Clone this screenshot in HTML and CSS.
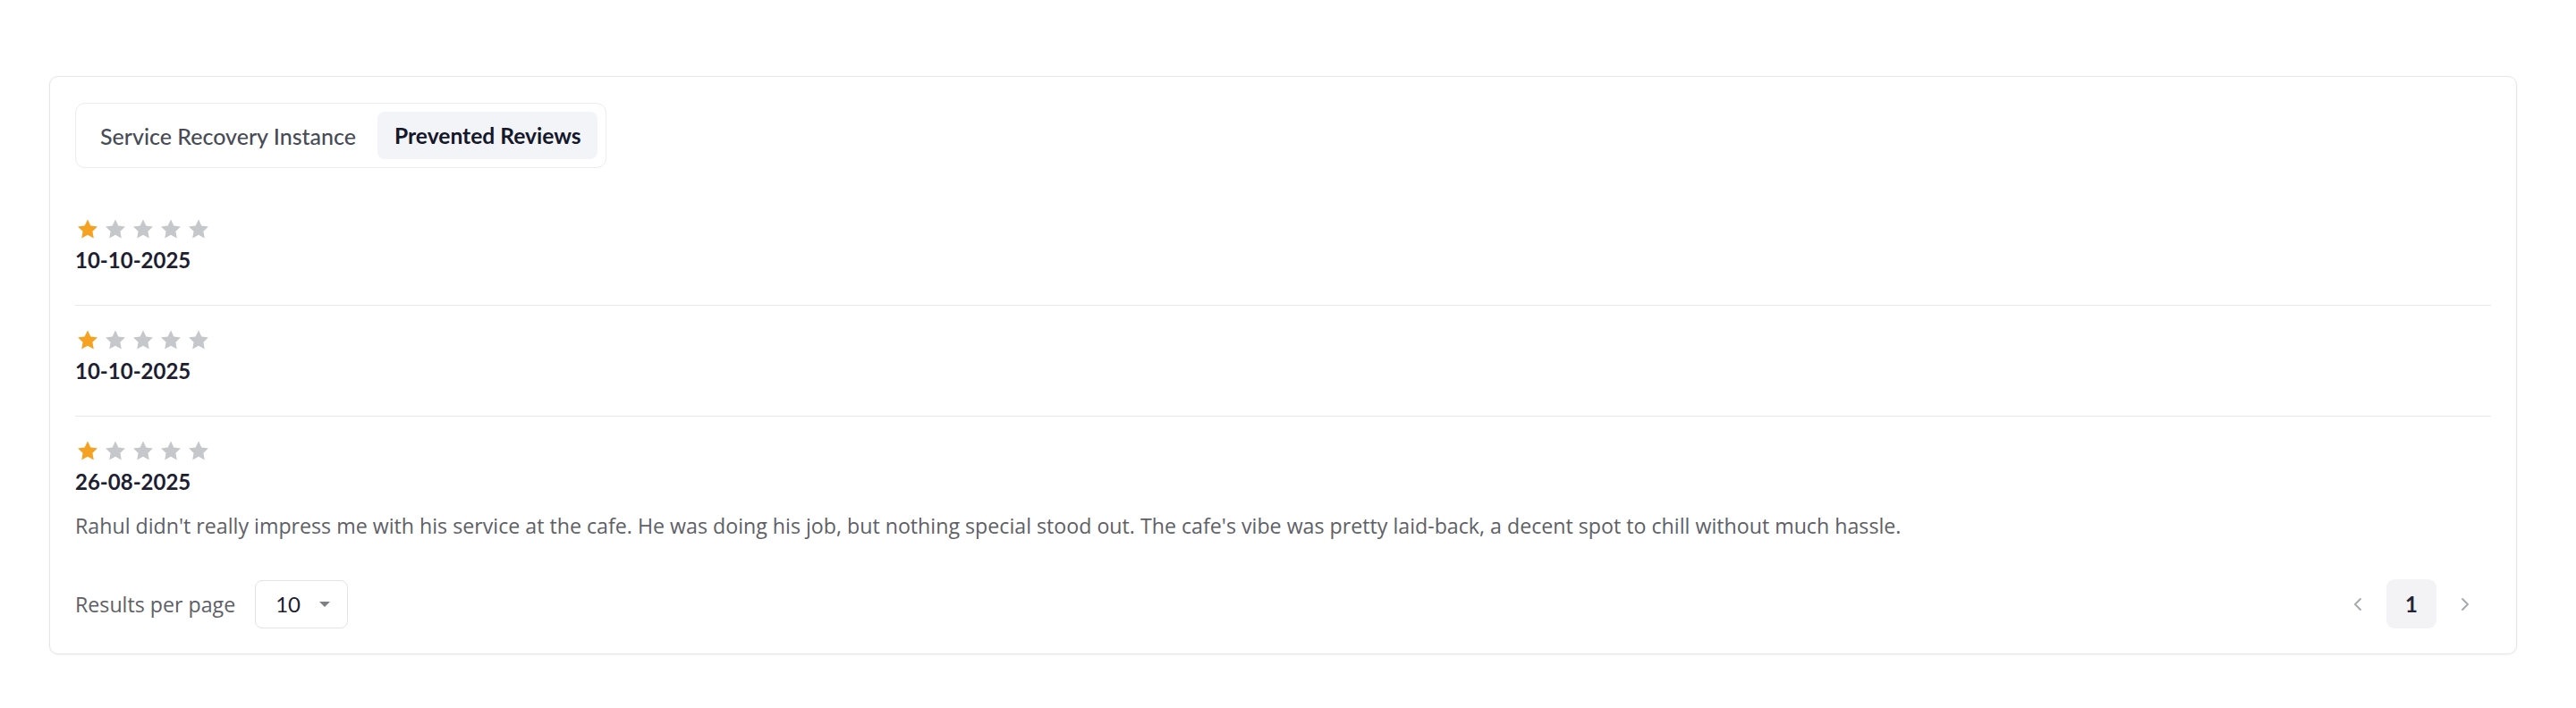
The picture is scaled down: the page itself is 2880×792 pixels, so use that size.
FILE: index.html
```html
<!DOCTYPE html>
<html lang="en">
<head>
<meta charset="utf-8">
<title>Prevented Reviews</title>
<link rel="stylesheet" href="styles.css">
</head>
<body>
<div class="page">
  <section class="card">
    <div class="tabs">
      <button class="tab">Service Recovery Instance</button>
      <button class="tab active">Prevented Reviews</button>
    </div>

    <ul class="reviews">
      <li class="review">
        <div class="stars">
          <svg class="star on" viewBox="0 0 24 24"><path d="M12 1.5l3.2 6.7 7.3 1-5.3 5 1.3 7.3L12 18l-6.5 3.5 1.3-7.3-5.3-5 7.3-1z"/></svg>
          <svg class="star" viewBox="0 0 24 24"><path d="M12 1.5l3.2 6.7 7.3 1-5.3 5 1.3 7.3L12 18l-6.5 3.5 1.3-7.3-5.3-5 7.3-1z"/></svg>
          <svg class="star" viewBox="0 0 24 24"><path d="M12 1.5l3.2 6.7 7.3 1-5.3 5 1.3 7.3L12 18l-6.5 3.5 1.3-7.3-5.3-5 7.3-1z"/></svg>
          <svg class="star" viewBox="0 0 24 24"><path d="M12 1.5l3.2 6.7 7.3 1-5.3 5 1.3 7.3L12 18l-6.5 3.5 1.3-7.3-5.3-5 7.3-1z"/></svg>
          <svg class="star" viewBox="0 0 24 24"><path d="M12 1.5l3.2 6.7 7.3 1-5.3 5 1.3 7.3L12 18l-6.5 3.5 1.3-7.3-5.3-5 7.3-1z"/></svg>
        </div>
        <div class="date">10-10-2025</div>
      </li>
      <li class="review">
        <div class="stars">
          <svg class="star on" viewBox="0 0 24 24"><path d="M12 1.5l3.2 6.7 7.3 1-5.3 5 1.3 7.3L12 18l-6.5 3.5 1.3-7.3-5.3-5 7.3-1z"/></svg>
          <svg class="star" viewBox="0 0 24 24"><path d="M12 1.5l3.2 6.7 7.3 1-5.3 5 1.3 7.3L12 18l-6.5 3.5 1.3-7.3-5.3-5 7.3-1z"/></svg>
          <svg class="star" viewBox="0 0 24 24"><path d="M12 1.5l3.2 6.7 7.3 1-5.3 5 1.3 7.3L12 18l-6.5 3.5 1.3-7.3-5.3-5 7.3-1z"/></svg>
          <svg class="star" viewBox="0 0 24 24"><path d="M12 1.5l3.2 6.7 7.3 1-5.3 5 1.3 7.3L12 18l-6.5 3.5 1.3-7.3-5.3-5 7.3-1z"/></svg>
          <svg class="star" viewBox="0 0 24 24"><path d="M12 1.5l3.2 6.7 7.3 1-5.3 5 1.3 7.3L12 18l-6.5 3.5 1.3-7.3-5.3-5 7.3-1z"/></svg>
        </div>
        <div class="date">10-10-2025</div>
      </li>
      <li class="review">
        <div class="stars">
          <svg class="star on" viewBox="0 0 24 24"><path d="M12 1.5l3.2 6.7 7.3 1-5.3 5 1.3 7.3L12 18l-6.5 3.5 1.3-7.3-5.3-5 7.3-1z"/></svg>
          <svg class="star" viewBox="0 0 24 24"><path d="M12 1.5l3.2 6.7 7.3 1-5.3 5 1.3 7.3L12 18l-6.5 3.5 1.3-7.3-5.3-5 7.3-1z"/></svg>
          <svg class="star" viewBox="0 0 24 24"><path d="M12 1.5l3.2 6.7 7.3 1-5.3 5 1.3 7.3L12 18l-6.5 3.5 1.3-7.3-5.3-5 7.3-1z"/></svg>
          <svg class="star" viewBox="0 0 24 24"><path d="M12 1.5l3.2 6.7 7.3 1-5.3 5 1.3 7.3L12 18l-6.5 3.5 1.3-7.3-5.3-5 7.3-1z"/></svg>
          <svg class="star" viewBox="0 0 24 24"><path d="M12 1.5l3.2 6.7 7.3 1-5.3 5 1.3 7.3L12 18l-6.5 3.5 1.3-7.3-5.3-5 7.3-1z"/></svg>
        </div>
        <div class="date">26-08-2025</div>
        <p class="text">Rahul didn't really impress me with his service at the cafe. He was doing his job, but nothing special stood out. The cafe's vibe was pretty laid-back, a decent spot to chill without much hassle.</p>
      </li>
    </ul>

    <footer class="footer">
      <div class="per-page">
        <span class="per-label">Results per page</span>
        <div class="select">
          <span class="select-value">10</span>
          <svg class="caret" viewBox="0 0 12 6"><path d="M0 0h12L6 6z"/></svg>
        </div>
      </div>
      <nav class="pager">
        <button class="pg-btn arrow" aria-label="Previous">
          <svg viewBox="0 0 12 16"><path d="M9 2L3 8l6 6"/></svg>
        </button>
        <button class="pg-btn current">1</button>
        <button class="pg-btn arrow" aria-label="Next">
          <svg viewBox="0 0 12 16"><path d="M3 2l6 6-6 6"/></svg>
        </button>
      </nav>
    </footer>
  </section>
</div>
</body>
</html>
```

FILE: styles.css
```css
* { box-sizing: border-box; }

html, body {
  margin: 0;
  padding: 0;
  background: #ffffff;
}

body {
  font-family: Lato, "Open Sans", "Liberation Sans", sans-serif;
  color: #1f2233;
}

.page {
  padding: 85px 66px 40px 55px;
}

.card {
  border: 1px solid #e6e6e8;
  border-radius: 10px;
  box-shadow: 0 1px 3px rgba(0, 0, 0, 0.05);
  padding: 29px 28px 28px 28px;
  background: #fff;
}

/* Tabs */
.tabs {
  display: inline-flex;
  gap: 5px;
  padding: 9px;
  border: 1px solid #ededf0;
  border-radius: 11px;
  background: #fff;
}

.tab {
  font-family: inherit;
  font-size: 25px;
  font-weight: 500;
  color: #474c57;
  background: transparent;
  border: 0;
  border-radius: 8px;
  height: 53px;
  padding: 0 19px 0 18px;
  cursor: pointer;
}

.tab.active {
  font-weight: 700;
  font-size: 24.6px;
  color: #15172a;
  background: #f3f4f7;
  padding: 0 18px 0 19px;
}

/* Reviews */
.reviews {
  list-style: none;
  margin: 30px 0 0;
  padding: 0;
}

.review {
  padding: 26px 0 34px;
  border-bottom: 1px solid #e8e8ea;
}

.review:last-child {
  border-bottom: 0;
  padding-bottom: 0;
}

.stars {
  display: flex;
  gap: 5px;
  height: 25px;
  margin-left: 1px;
}

.star {
  width: 26px;
  height: 25px;
  fill: #c6c7ca;
}

.star.on {
  fill: #f5a122;
}

.date {
  margin-top: 6px;
  font-size: 24px;
  line-height: 32px;
  font-weight: 700;
  color: #1d2030;
}

.text {
  margin: 18px 0 0;
  font-family: "Open Sans", Lato, sans-serif;
  font-size: 23.2px;
  line-height: 30px;
  color: #5e6066;
}

/* Footer */
.footer {
  margin-top: 45px;
  display: flex;
  align-items: center;
  justify-content: space-between;
}

.per-page {
  display: flex;
  align-items: center;
  gap: 22px;
}

.per-label {
  font-family: "Open Sans", Lato, sans-serif;
  font-size: 23.2px;
  color: #5e6066;
}

.select {
  display: flex;
  align-items: center;
  width: 104px;
  height: 54px;
  padding: 0 0 0 22px;
  border: 1px solid #e3e3e6;
  border-radius: 8px;
  background: #fff;
}

.select-value {
  font-size: 24px;
  color: #1d2030;
}

.caret {
  width: 12px;
  height: 6px;
  margin-left: 21px;
  fill: #7d7f85;
}

.pager {
  display: flex;
  align-items: center;
  gap: 4px;
  margin-right: 1px;
}

.pg-btn {
  width: 56px;
  height: 55px;
  border: 0;
  border-radius: 9px;
  background: transparent;
  font-family: inherit;
  display: flex;
  align-items: center;
  justify-content: center;
  padding: 0;
  cursor: pointer;
}

.pg-btn.current {
  background: #f3f3f5;
  font-size: 24px;
  font-weight: 700;
  color: #23233b;
}

.arrow svg {
  width: 12px;
  height: 16px;
  fill: none;
  stroke: #a9aaae;
  stroke-width: 2;
  stroke-linecap: round;
  stroke-linejoin: round;
}
```
